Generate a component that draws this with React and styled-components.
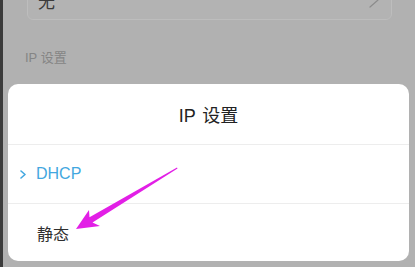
import React from 'react';
import styled, { createGlobalStyle } from 'styled-components';

const GlobalStyle = createGlobalStyle`
    html, body {
        margin: 0;
        padding: 0;
        background: #b1b1b1;
        overflow: hidden;
    }
    body {
        font-family: "Liberation Sans", "Noto Sans CJK SC", sans-serif;
    }
`;

const Page = styled.div`
    position: relative;
    width: 415px;
    height: 267px;
    display: flex;
    overflow: hidden;
    background: #b1b1b1;
`;

const Edge = styled.div`
    width: 3px;
    flex-shrink: 0;
    background: #3b3b3b;
`;

const Screen = styled.div`
    flex: 1;
    display: flex;
    flex-direction: column;
`;

const Card = styled.div`
    margin: -20px 23px 0 24px;
    height: 40px;
    padding: 0 12px 0 10px;
    display: flex;
    align-items: center;
    justify-content: space-between;
    border: 1px solid #bdbdbd;
    border-radius: 6px;
    background: #b3b3b3;
    box-sizing: border-box;
`;

const CardValue = styled.span`
    font-size: 17px;
    color: #3a3a3a;
`;

const SectionLabel = styled.div`
    margin: 31px 0 0 22px;
    font-size: 13px;
    line-height: 13px;
    color: #858585;
`;

const Sheet = styled.div`
    margin: 20px 6px 0 5px;
    height: 177px;
    background: #ffffff;
    border-radius: 10px;
    display: flex;
    flex-direction: column;
`;

const SheetTitle = styled.div`
    height: 60px;
    display: flex;
    align-items: center;
    justify-content: center;
    font-size: 18px;
    color: #222222;
    border-bottom: 1px solid #ededed;
    word-spacing: 2px;
`;

const Option = styled.div`
    height: ${p => p.h}px;
    display: flex;
    align-items: center;
    padding-left: ${p => (p.selected ? 12 : 29)}px;
    gap: 10px;
    font-size: 16px;
    color: ${p => (p.selected ? '#42a7e0' : '#2f2f2f')};
    border-bottom: ${p => (p.last ? 'none' : '1px solid #ededed')};
`;

const Arrow = styled.svg`
    position: absolute;
    left: 0;
    top: 0;
    pointer-events: none;
`;

const Chevron = ({ w, h, color, stroke }) => (
    <svg width={w} height={h} viewBox={`0 0 ${w} ${h}`}>
        <polyline
            points={`1,1 ${w - 1},${h / 2} 1,${h - 1}`}
            fill="none"
            stroke={color}
            strokeWidth={stroke}
            strokeLinecap="round"
            strokeLinejoin="round"
        />
    </svg>
);

const App = () => {
    return (
        <Page>
            <GlobalStyle />
            <Edge />
            <Screen>
                <Card>
                    <CardValue>无</CardValue>
                    <Chevron w={10} h={16} color="#8c8c8c" stroke={1.2} />
                </Card>
                <SectionLabel>IP 设置</SectionLabel>
                <Sheet>
                    <SheetTitle>IP 设置</SheetTitle>
                    <Option selected h={58}>
                        <Chevron w={6} h={9} color="#42a7e0" stroke={1.6} />
                        DHCP
                    </Option>
                    <Option last h={57}>静态</Option>
                </Sheet>
            </Screen>
            <Arrow width="415" height="267" viewBox="0 0 415 267">
                <polygon
                    points="76,229 89,210 89.5,217.3 177,167.6 177.5,168.4 92.5,222.6 100,226"
                    fill="#e21fe6"
                />
            </Arrow>
        </Page>
    );
};

export default App;
